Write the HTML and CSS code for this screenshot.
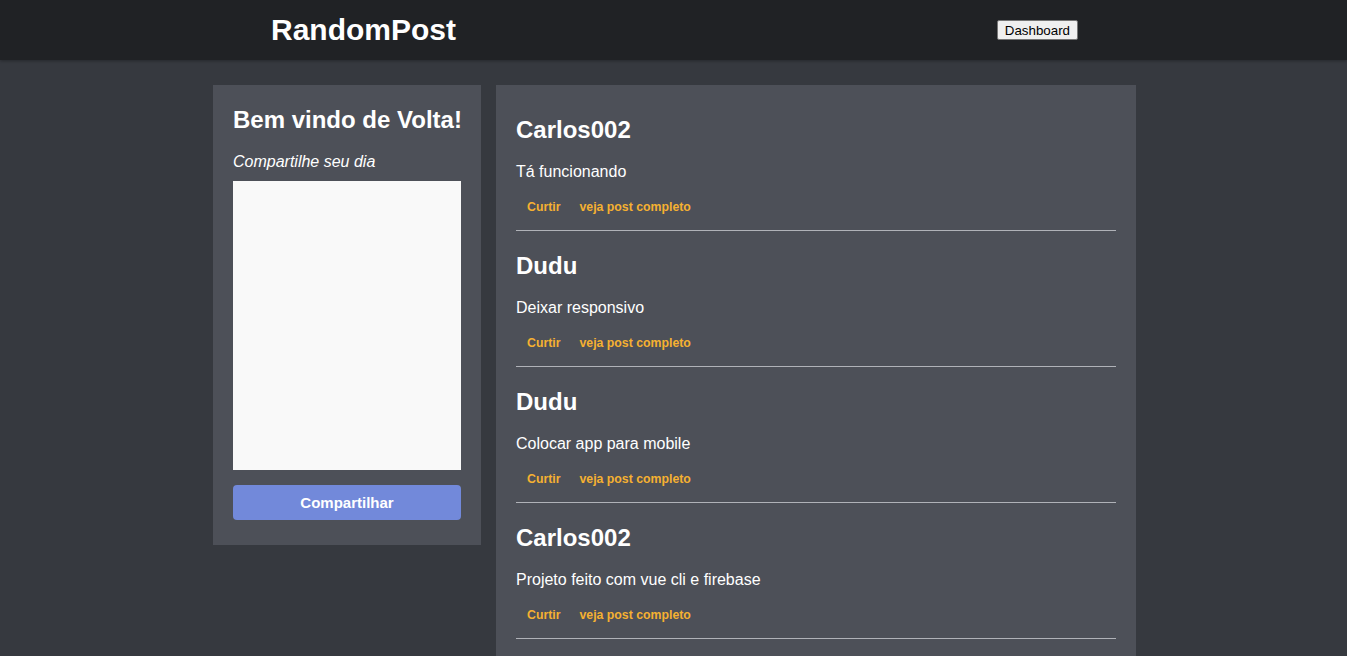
FILE: index.html
```html
<!DOCTYPE html>
<html lang="pt">
<head>
<meta charset="utf-8">
<title>RandomPost</title>
<link rel="stylesheet" href="styles.css">
</head>
<body>
<header class="topbar">
  <div class="topbar-inner">
    <h1 class="brand">RandomPost</h1>
    <button class="dash-btn">Dashboard</button>
  </div>
</header>
<main class="content">
  <section class="panel share">
    <h2 class="welcome">Bem vindo de Volta!</h2>
    <label class="share-label">Compartilhe seu dia</label>
    <textarea class="share-input"></textarea>
    <button class="share-btn">Compartilhar</button>
  </section>
  <section class="panel feed">
    <article class="post">
      <h2 class="post-author">Carlos002</h2>
      <p class="post-text">Tá funcionando</p>
      <div class="post-actions"><a class="action">Curtir</a><a class="action">veja post completo</a></div>
    </article>
    <article class="post">
      <h2 class="post-author">Dudu</h2>
      <p class="post-text">Deixar responsivo</p>
      <div class="post-actions"><a class="action">Curtir</a><a class="action">veja post completo</a></div>
    </article>
    <article class="post">
      <h2 class="post-author">Dudu</h2>
      <p class="post-text">Colocar app para mobile</p>
      <div class="post-actions"><a class="action">Curtir</a><a class="action">veja post completo</a></div>
    </article>
    <article class="post">
      <h2 class="post-author">Carlos002</h2>
      <p class="post-text">Projeto feito com vue cli e firebase</p>
      <div class="post-actions"><a class="action">Curtir</a><a class="action">veja post completo</a></div>
    </article>
  </section>
</main>
</body>
</html>
```
FILE: styles.css
```css
* { box-sizing: border-box; }
html, body { margin: 0; padding: 0; }
body {
  background: #36393f;
  font-family: "Liberation Sans", Arial, sans-serif;
  color: #ffffff;
  min-height: 656px;
}
.topbar {
  background: #202225;
  height: 60px;
  box-shadow: 0 1px 3px rgba(0,0,0,0.3);
}
.topbar-inner {
  width: 807px;
  margin-left: 271px;
  height: 60px;
  display: flex;
  align-items: center;
  justify-content: space-between;
}
.brand {
  margin: 0;
  font-size: 30px;
  font-weight: bold;
  color: #ffffff;
}
.dash-btn {
  font-family: "Liberation Sans", Arial, sans-serif;
  font-size: 13.33px;
  padding: 1px 7px;
  height: 20px;
  background: #efefef;
  color: #000;
  border: 1px solid #767676;
  border-radius: 2px;
}
.content {
  display: flex;
  align-items: flex-start;
  gap: 15px;
  width: 923px;
  margin: 25px 0 0 213px;
}
.panel {
  background: #4d5058;
}
.share {
  width: 268px;
  display: flex;
  flex-direction: column;
  padding: 20px 20px 25px;
}
.welcome {
  margin: 0;
  font-size: 24px;
  font-weight: bold;
  line-height: 28px;
  padding-top: 1px;
  white-space: nowrap;
}
.share-label {
  font-style: italic;
  font-size: 16px;
  line-height: 20px;
  margin-top: 18px;
  margin-bottom: 9px;
}
.share-input {
  width: 228px;
  height: 289px;
  background: #f9f9f9;
  border: none;
  resize: none;
  display: block;
}
.share-btn {
  margin-top: 15px;
  height: 35px;
  background: #7289da;
  color: #ffffff;
  border: none;
  border-radius: 4px;
  font-family: "Liberation Sans", Arial, sans-serif;
  font-size: 15px;
  font-weight: bold;
}
.feed {
  width: 640px;
  padding: 10px 20px 0;
  min-height: 580px;
}
.post {
  border-bottom: 1px solid #b0b2b8;
  padding: 20px 0 15px;
}
.post-author {
  margin: 0;
  font-size: 24px;
  font-weight: bold;
  line-height: 30px;
}
.post-text {
  margin: 17px 0 0;
  font-size: 16px;
  line-height: 20px;
}
.post-actions {
  display: flex;
  gap: 19px;
  padding-left: 11px;
  margin-top: 17px;
}
.action {
  color: #f5b131;
  font-size: 12.3px;
  font-weight: bold;
  line-height: 16px;
  cursor: pointer;
}
```
